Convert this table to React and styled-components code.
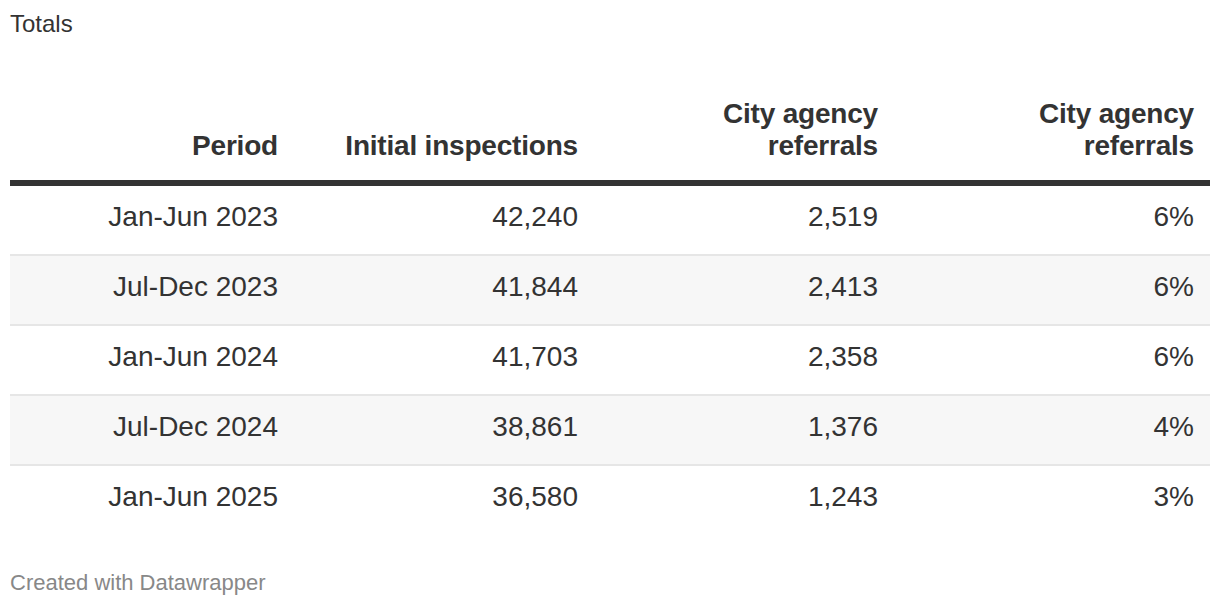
import React from "react";
import styled, { createGlobalStyle } from "styled-components";

const GlobalStyle = createGlobalStyle`
  body {
    margin: 0;
    background: #fff;
    font-family: "Liberation Sans", Arial, Helvetica, sans-serif;
    color: #333;
  }
`;

const Chart = styled.div`
  padding: 0 10px;
  width: 1200px;
`;

const Title = styled.div`
  font-size: 24px;
  line-height: 26px;
  padding-top: 11px;
  color: #333;
`;

const Table = styled.div`
  margin-top: 61px;
  display: flex;
  flex-direction: column;
`;

const Row = styled.div`
  display: grid;
  grid-template-columns: 278px 300px 300px 322px;
  background: ${(p) => (p.$shaded ? "#f7f7f7" : "#fff")};
  border-bottom: ${(p) => (p.$last ? "none" : "2px solid #e6e6e6")};
`;

const HeadRow = styled.div`
  display: grid;
  grid-template-columns: 278px 300px 300px 322px;
  border-bottom: 6px solid #333;
`;

const HeadCell = styled.div`
  display: flex;
  align-items: flex-end;
  justify-content: flex-end;
  text-align: right;
  font-size: 28px;
  font-weight: 700;
  line-height: 32px;
  letter-spacing: -0.2px;
  color: #333;
  padding: 0 ${(p) => (p.$lastCol ? "16px" : "10px")} 18px 0;
`;

const Cell = styled.div`
  text-align: right;
  font-size: 28px;
  line-height: 36px;
  padding: 13px ${(p) => (p.$lastCol ? "16px" : "10px")} 19px 0;
  color: #333;
`;

const Footer = styled.div`
  margin-top: 36px;
  font-size: 22px;
  line-height: 26px;
  color: #888;
`;

const headers = [
  "Period",
  "Initial inspections",
  <>City agency<br />referrals</>,
  <>City agency<br />referrals</>,
];

const rows = [
  ["Jan-Jun 2023", "42,240", "2,519", "6%"],
  ["Jul-Dec 2023", "41,844", "2,413", "6%"],
  ["Jan-Jun 2024", "41,703", "2,358", "6%"],
  ["Jul-Dec 2024", "38,861", "1,376", "4%"],
  ["Jan-Jun 2025", "36,580", "1,243", "3%"],
];

export default function App() {
  return (
    <>
      <GlobalStyle />
      <Chart>
        <Title>Totals</Title>
        <Table>
          <HeadRow>
            {headers.map((h, i) => (
              <HeadCell key={i} $lastCol={i === 3}>
                <span>{h}</span>
              </HeadCell>
            ))}
          </HeadRow>
          {rows.map((r, ri) => (
            <Row key={ri} $shaded={ri % 2 === 1} $last={ri === rows.length - 1}>
              {r.map((c, ci) => (
                <Cell key={ci} $lastCol={ci === 3}>
                  {c}
                </Cell>
              ))}
            </Row>
          ))}
        </Table>
        <Footer>Created with Datawrapper</Footer>
      </Chart>
    </>
  );
}
